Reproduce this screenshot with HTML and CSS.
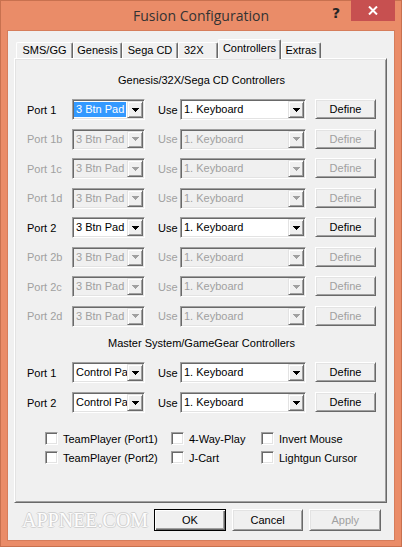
FILE: index.html
```html
<!DOCTYPE html>
<html>
<head>
<meta charset="utf-8">
<title>Fusion Configuration</title>
<link rel="stylesheet" href="styles.css">
</head>
<body>
<div class="window">
  <div class="titlebar">
    <div class="tb-side"></div>
    <div class="title">Fusion Configuration</div>
    <div class="tb-side tb-controls">
      <div class="help">?</div>
      <div class="close"><svg width="10" height="9" viewBox="0 0 10 9"><path d="M1 0.5L9 8.5M9 0.5L1 8.5" stroke="#fff" stroke-width="2"/></svg></div>
    </div>
  </div>
  <div class="client">
    <div class="tabs">
      <div class="tab tab-sms">SMS/GG</div>
      <div class="tab tab-gen">Genesis</div>
      <div class="tab tab-scd">Sega CD</div>
      <div class="tab tab-32x">32X</div>
      <div class="tab tab-ctl active">Controllers</div>
      <div class="tab tab-ext">Extras</div>
    </div>
    <div class="panel">
      <div class="heading">Genesis/32X/Sega CD Controllers</div>
      <div class="rows gen">
        <div class="row">
          <span class="lbl">Port 1</span>
          <div class="combo c1"><span class="val sel"><span>3 Btn Pad</span></span><span class="arr"><svg width="7" height="4" viewBox="0 0 7 4" shape-rendering="crispEdges"><path d="M0 0h7v1h-1v1h-1v1h-1v1h-1v-1h-1v-1h-1v-1h-1z"/></svg></span></div>
          <span class="use">Use</span>
          <div class="combo c2"><span class="val">1. Keyboard</span><span class="arr"><svg width="7" height="4" viewBox="0 0 7 4" shape-rendering="crispEdges"><path d="M0 0h7v1h-1v1h-1v1h-1v1h-1v-1h-1v-1h-1v-1h-1z"/></svg></span></div>
          <div class="btn define">Define</div>
        </div>
        <div class="row dis">
          <span class="lbl">Port 1b</span>
          <div class="combo c1"><span class="val">3 Btn Pad</span><span class="arr"><svg width="7" height="4" viewBox="0 0 7 4" shape-rendering="crispEdges"><path d="M0 0h7v1h-1v1h-1v1h-1v1h-1v-1h-1v-1h-1v-1h-1z"/></svg></span></div>
          <span class="use">Use</span>
          <div class="combo c2"><span class="val">1. Keyboard</span><span class="arr"><svg width="7" height="4" viewBox="0 0 7 4" shape-rendering="crispEdges"><path d="M0 0h7v1h-1v1h-1v1h-1v1h-1v-1h-1v-1h-1v-1h-1z"/></svg></span></div>
          <div class="btn define">Define</div>
        </div>
        <div class="row dis">
          <span class="lbl">Port 1c</span>
          <div class="combo c1"><span class="val">3 Btn Pad</span><span class="arr"><svg width="7" height="4" viewBox="0 0 7 4" shape-rendering="crispEdges"><path d="M0 0h7v1h-1v1h-1v1h-1v1h-1v-1h-1v-1h-1v-1h-1z"/></svg></span></div>
          <span class="use">Use</span>
          <div class="combo c2"><span class="val">1. Keyboard</span><span class="arr"><svg width="7" height="4" viewBox="0 0 7 4" shape-rendering="crispEdges"><path d="M0 0h7v1h-1v1h-1v1h-1v1h-1v-1h-1v-1h-1v-1h-1z"/></svg></span></div>
          <div class="btn define">Define</div>
        </div>
        <div class="row dis">
          <span class="lbl">Port 1d</span>
          <div class="combo c1"><span class="val">3 Btn Pad</span><span class="arr"><svg width="7" height="4" viewBox="0 0 7 4" shape-rendering="crispEdges"><path d="M0 0h7v1h-1v1h-1v1h-1v1h-1v-1h-1v-1h-1v-1h-1z"/></svg></span></div>
          <span class="use">Use</span>
          <div class="combo c2"><span class="val">1. Keyboard</span><span class="arr"><svg width="7" height="4" viewBox="0 0 7 4" shape-rendering="crispEdges"><path d="M0 0h7v1h-1v1h-1v1h-1v1h-1v-1h-1v-1h-1v-1h-1z"/></svg></span></div>
          <div class="btn define">Define</div>
        </div>
        <div class="row">
          <span class="lbl">Port 2</span>
          <div class="combo c1"><span class="val">3 Btn Pad</span><span class="arr"><svg width="7" height="4" viewBox="0 0 7 4" shape-rendering="crispEdges"><path d="M0 0h7v1h-1v1h-1v1h-1v1h-1v-1h-1v-1h-1v-1h-1z"/></svg></span></div>
          <span class="use">Use</span>
          <div class="combo c2"><span class="val">1. Keyboard</span><span class="arr"><svg width="7" height="4" viewBox="0 0 7 4" shape-rendering="crispEdges"><path d="M0 0h7v1h-1v1h-1v1h-1v1h-1v-1h-1v-1h-1v-1h-1z"/></svg></span></div>
          <div class="btn define">Define</div>
        </div>
        <div class="row dis">
          <span class="lbl">Port 2b</span>
          <div class="combo c1"><span class="val">3 Btn Pad</span><span class="arr"><svg width="7" height="4" viewBox="0 0 7 4" shape-rendering="crispEdges"><path d="M0 0h7v1h-1v1h-1v1h-1v1h-1v-1h-1v-1h-1v-1h-1z"/></svg></span></div>
          <span class="use">Use</span>
          <div class="combo c2"><span class="val">1. Keyboard</span><span class="arr"><svg width="7" height="4" viewBox="0 0 7 4" shape-rendering="crispEdges"><path d="M0 0h7v1h-1v1h-1v1h-1v1h-1v-1h-1v-1h-1v-1h-1z"/></svg></span></div>
          <div class="btn define">Define</div>
        </div>
        <div class="row dis">
          <span class="lbl">Port 2c</span>
          <div class="combo c1"><span class="val">3 Btn Pad</span><span class="arr"><svg width="7" height="4" viewBox="0 0 7 4" shape-rendering="crispEdges"><path d="M0 0h7v1h-1v1h-1v1h-1v1h-1v-1h-1v-1h-1v-1h-1z"/></svg></span></div>
          <span class="use">Use</span>
          <div class="combo c2"><span class="val">1. Keyboard</span><span class="arr"><svg width="7" height="4" viewBox="0 0 7 4" shape-rendering="crispEdges"><path d="M0 0h7v1h-1v1h-1v1h-1v1h-1v-1h-1v-1h-1v-1h-1z"/></svg></span></div>
          <div class="btn define">Define</div>
        </div>
        <div class="row dis">
          <span class="lbl">Port 2d</span>
          <div class="combo c1"><span class="val">3 Btn Pad</span><span class="arr"><svg width="7" height="4" viewBox="0 0 7 4" shape-rendering="crispEdges"><path d="M0 0h7v1h-1v1h-1v1h-1v1h-1v-1h-1v-1h-1v-1h-1z"/></svg></span></div>
          <span class="use">Use</span>
          <div class="combo c2"><span class="val">1. Keyboard</span><span class="arr"><svg width="7" height="4" viewBox="0 0 7 4" shape-rendering="crispEdges"><path d="M0 0h7v1h-1v1h-1v1h-1v1h-1v-1h-1v-1h-1v-1h-1z"/></svg></span></div>
          <div class="btn define">Define</div>
        </div>
      </div>
      <div class="heading h2">Master System/GameGear Controllers</div>
      <div class="rows ms">
        <div class="row">
          <span class="lbl">Port 1</span>
          <div class="combo c1"><span class="val">Control Pad</span><span class="arr"><svg width="7" height="4" viewBox="0 0 7 4" shape-rendering="crispEdges"><path d="M0 0h7v1h-1v1h-1v1h-1v1h-1v-1h-1v-1h-1v-1h-1z"/></svg></span></div>
          <span class="use">Use</span>
          <div class="combo c2"><span class="val">1. Keyboard</span><span class="arr"><svg width="7" height="4" viewBox="0 0 7 4" shape-rendering="crispEdges"><path d="M0 0h7v1h-1v1h-1v1h-1v1h-1v-1h-1v-1h-1v-1h-1z"/></svg></span></div>
          <div class="btn define">Define</div>
        </div>
        <div class="row">
          <span class="lbl">Port 2</span>
          <div class="combo c1"><span class="val">Control Pad</span><span class="arr"><svg width="7" height="4" viewBox="0 0 7 4" shape-rendering="crispEdges"><path d="M0 0h7v1h-1v1h-1v1h-1v1h-1v-1h-1v-1h-1v-1h-1z"/></svg></span></div>
          <span class="use">Use</span>
          <div class="combo c2"><span class="val">1. Keyboard</span><span class="arr"><svg width="7" height="4" viewBox="0 0 7 4" shape-rendering="crispEdges"><path d="M0 0h7v1h-1v1h-1v1h-1v1h-1v-1h-1v-1h-1v-1h-1z"/></svg></span></div>
          <div class="btn define">Define</div>
        </div>
      </div>
      <div class="checks">
        <label class="chk"><span class="box"></span>TeamPlayer (Port1)</label>
        <label class="chk"><span class="box"></span>4-Way-Play</label>
        <label class="chk"><span class="box"></span>Invert Mouse</label>
        <label class="chk"><span class="box"></span>TeamPlayer (Port2)</label>
        <label class="chk"><span class="box"></span>J-Cart</label>
        <label class="chk"><span class="box"></span>Lightgun Cursor</label>
      </div>
    </div>
    <div class="footer">
      <div class="watermark">APPNEE.COM</div>
      <div class="btn big default">OK</div>
      <div class="btn big">Cancel</div>
      <div class="btn big disabled">Apply</div>
    </div>
  </div>
</div>
</body>
</html>
```

FILE: styles.css
```css
* { box-sizing: border-box; }
html, body { margin: 0; padding: 0; }
body {
  width: 402px;
  height: 547px;
  overflow: hidden;
  font-family: "Liberation Sans", Arial, sans-serif;
  font-size: 11px;
  color: #000;
}
.window {
  width: 402px;
  height: 547px;
  background: #EA8C68;
  border: 1px solid #C8714F;
  display: flex;
  flex-direction: column;
}
.titlebar {
  height: 30px;
  display: grid;
  grid-template-columns: 1fr auto 1fr;
  align-items: start;
}
.title {
  font-family: "Open Sans", "Noto Sans", sans-serif;
  font-size: 14px;
  color: #333;
  line-height: 20px;
  padding-top: 5px;
  white-space: nowrap;
}
.tb-controls {
  display: flex;
  justify-content: flex-end;
  padding-right: 6px;
}
.help {
  width: 26px;
  height: 20px;
  font: bold 14px "DejaVu Sans", sans-serif;
  color: #262626;
  text-align: center;
  line-height: 24px;
  margin-right: 2px;
}
.close {
  width: 44px;
  height: 21px;
  margin-top: -1px;
  background: #C75050;
  display: flex;
  align-items: center;
  justify-content: center;
}
.client {
  margin: 0 7px;
  height: 509px;
  background: #F0F0F0;
  box-shadow: 0 0 0 1px #D67D5B;
  padding: 8px 7px 0 6px;
  display: flex;
  flex-direction: column;
}
.tabs {
  height: 19px;
  margin-left: 2px;
  display: flex;
  align-items: flex-end;
}
.tab {
  height: 16px;
  line-height: 14px;
  text-align: center;
  border: 1px solid #fff;
  border-right-color: #696969;
  border-bottom: none;
  box-shadow: inset -1px 0 #a0a0a0;
  border-radius: 2px 2px 0 0;
  background: #F0F0F0;
  white-space: nowrap;
}
.tab-sms { width: 57px; }
.tab-gen { width: 49px; }
.tab-scd { width: 56px; }
.tab-32x { width: 40px; text-align: left; padding-left: 5px; }
.tab-ctl { width: 63px; }
.tab-ext { width: 40px; }
.tab.active {
  height: 20px;
  line-height: 16px;
  margin-bottom: -1px;
  position: relative;
  z-index: 1;
}
.panel {
  height: 445px;
  border: 1px solid;
  border-color: #fff #696969 #696969 #fff;
  box-shadow: inset 1px 1px #e3e3e3, inset -1px -1px #a0a0a0;
  padding-top: 14px;
}
.heading {
  text-align: center;
  line-height: 14px;
  padding-left: 2px;
}
.rows {
  display: grid;
  padding-left: 12px;
}
.rows.gen {
  margin-top: 12px;
  row-gap: 8.5px;
}
.h2 { margin-top: 9.5px; }
.rows.ms {
  margin-top: 12px;
  row-gap: 9px;
}
.row {
  display: flex;
  align-items: center;
  height: 21px;
}
.lbl { width: 45px; white-space: nowrap; }
.use { margin-left: 13px; width: 22px; }
.combo {
  height: 21px;
  border: 1px solid;
  border-color: #a0a0a0 #fff #fff #a0a0a0;
  box-shadow: inset 1px 1px #696969, inset -1px -1px #e3e3e3;
  padding: 1px;
  background: #fff;
  display: flex;
}
.c1 { width: 73px; }
.c2 { width: 126px; }
.val {
  flex: 1;
  min-width: 0;
  overflow: hidden;
  white-space: nowrap;
  line-height: 17px;
  padding-left: 2px;
}
.val.sel { padding: 1px 1px 1px 0; }
.val.sel span {
  display: block;
  background: #3399FF;
  color: #fff;
  padding-left: 2px;
  line-height: 15px;
}
.arr {
  width: 16px;
  height: 17px;
  flex: none;
  background: #F0F0F0;
  border: 1px solid;
  border-color: #e3e3e3 #696969 #696969 #e3e3e3;
  box-shadow: inset 1px 1px #fff, inset -1px -1px #a0a0a0;
  display: flex;
  align-items: center;
  justify-content: center;
  color: #000;
}
.arr svg { fill: currentColor; display: block; }
.btn {
  background: #F0F0F0;
  border: 1px solid;
  border-color: #fff #696969 #696969 #fff;
  box-shadow: inset 1px 1px #e3e3e3, inset -1px -1px #a0a0a0;
  display: flex;
  align-items: center;
  justify-content: center;
  white-space: nowrap;
}
.define {
  margin-left: 9px;
  width: 61px;
  height: 20px;
  align-self: flex-start;
}
.dis .lbl, .dis .use, .dis .val, .dis .btn, .dis .arr { color: #A0A0A0; }
.dis .combo { background: #F0F0F0; }
.checks {
  margin-top: 19px;
  padding-left: 30px;
  display: grid;
  grid-template-columns: 126px 90px 1fr;
  row-gap: 6px;
}
.chk {
  display: flex;
  align-items: center;
  height: 13px;
  gap: 5px;
  white-space: nowrap;
}
.box {
  width: 13px;
  height: 13px;
  flex: none;
  background: #fff;
  border: 1px solid;
  border-color: #a0a0a0 #fff #fff #a0a0a0;
  box-shadow: inset 1px 1px #696969, inset -1px -1px #e3e3e3;
}
.footer {
  flex: 1;
  display: flex;
  align-items: flex-start;
  gap: 6px;
  padding: 6px 6px 0 8px;
}
.watermark {
  flex: 1;
  font-family: "Liberation Serif", "Times New Roman", serif;
  font-size: 20px;
  line-height: 22px;
  color: #fdfdfd;
  text-shadow: 1px 0 #d2d2d2, -1px 0 #d2d2d2, 0 1px #d2d2d2, 0 -1px #d2d2d2;
  white-space: nowrap;
}
.btn.big { width: 75px; height: 22px; }
.btn.default {
  border: 1px solid #000;
  box-shadow: inset 1px 1px #fff, inset -1px -1px #696969, inset -2px -2px #a0a0a0;
}
.btn.disabled { color: #A0A0A0; }
```
